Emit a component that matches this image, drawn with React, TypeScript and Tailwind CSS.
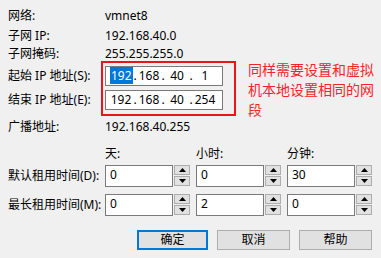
import React from 'react'

const font = { fontFamily: '"Segoe UI", "Noto Sans", "Noto Sans CJK SC", sans-serif' }

function InfoRow({ label, value, h }: { label: string; value: string; h: string }) {
  return (
    <div className={`flex items-center ${h}`}>
      <div className="w-[97px] shrink-0">{label}</div>
      <div>{value}</div>
    </div>
  )
}

function IpField({ octets, highlight }: { octets: string[]; highlight?: boolean }) {
  return (
    <div className="flex items-center h-[20px] w-[118px] bg-white border border-[#7a7a7a] pl-[4px]">
      {octets.map((o, i) => (
        <React.Fragment key={i}>
          <span className="w-[22px] text-center leading-[14px]">
            {i === 0 && highlight ? (
              <span className="bg-[#0078d7] text-white px-[1px]">{o}</span>
            ) : (
              o
            )}
          </span>
          {i < 3 && <span className="w-[6px] text-center">.</span>}
        </React.Fragment>
      ))}
    </div>
  )
}

function SpinBox({ value }: { value: string }) {
  return (
    <div className="flex h-[22px] w-[85px]">
      <div className="flex-1 bg-white border border-[#7a7a7a] pl-[4px] pt-[2px] leading-[14px]">{value}</div>
      <div className="w-[17px] flex flex-col gap-[1px] pl-[1px]">
        <div className="h-[10px] bg-[#e1e1e1] border border-[#adadad] flex items-center justify-center">
          <svg width="7" height="4" viewBox="0 0 7 4"><path d="M3.5 0 L7 4 L0 4 Z" fill="#000" /></svg>
        </div>
        <div className="h-[10px] bg-[#e1e1e1] border border-[#adadad] flex items-center justify-center">
          <svg width="7" height="4" viewBox="0 0 7 4"><path d="M0 0 L7 0 L3.5 4 Z" fill="#000" /></svg>
        </div>
      </div>
    </div>
  )
}

export default function App() {
  return (
    <div className="w-[381px] h-[258px] bg-[#f0f0f0] text-[12px] text-black overflow-hidden pl-[8px] pt-[6px]" style={font}>
      <InfoRow label="网络:" value="vmnet8" h="h-[20px]" />
      <InfoRow label="子网 IP:" value="192.168.40.0" h="h-[20px]" />
      <InfoRow label="子网掩码:" value="255.255.255.0" h="h-[15px]" />

      <div className="flex items-start">
        <div className="w-[93px] shrink-0 flex flex-col gap-[4px] pt-[5px]">
          <div className="h-[20px] flex items-center">起始 IP 地址(S):</div>
          <div className="h-[20px] flex items-center">结束 IP 地址(E):</div>
        </div>
        <div className="border-2 border-[#e8141e] pl-[2px] pr-[11px] pt-[3px] pb-[4px] flex flex-col gap-[4px]">
          <IpField octets={['192', '168', '40', '1']} highlight />
          <IpField octets={['192', '168', '40', '254']} />
        </div>
        <div
          className="ml-[12px] w-[130px] -mt-[2px] text-[14px] leading-[20px] text-[#f0242c]"
          style={{ fontFamily: '"Noto Sans CJK SC", sans-serif' }}
        >
          同样需要设置和虚拟机本地设置相同的网段
        </div>
      </div>

      <InfoRow label="广播地址:" value="192.168.40.255" h="h-[16px]" />

      <div className="flex h-[16px] items-center mt-[11px]">
        <div className="w-[97px] shrink-0" />
        <div className="w-[91px]">天:</div>
        <div className="w-[91px]">小时:</div>
        <div>分钟:</div>
      </div>

      <div className="flex items-center mt-[3px]">
        <div className="w-[97px] shrink-0">默认租用时间(D):</div>
        <div className="flex gap-[6px]">
          <SpinBox value="0" />
          <SpinBox value="0" />
          <SpinBox value="30" />
        </div>
      </div>
      <div className="flex items-center mt-[7px]">
        <div className="w-[97px] shrink-0">最长租用时间(M):</div>
        <div className="flex gap-[6px]">
          <SpinBox value="0" />
          <SpinBox value="2" />
          <SpinBox value="0" />
        </div>
      </div>

      <div className="flex mt-[14px] pl-[129px] gap-[9px]">
        <button className="w-[71px] h-[20px] bg-[#e1e1e1] border-2 border-[#0078d7] flex items-center justify-center">确定</button>
        <button className="w-[73px] h-[20px] bg-[#e1e1e1] border border-[#adadad] flex items-center justify-center">取消</button>
        <button className="w-[73px] h-[20px] bg-[#e1e1e1] border border-[#adadad] flex items-center justify-center">帮助</button>
      </div>
    </div>
  )
}
